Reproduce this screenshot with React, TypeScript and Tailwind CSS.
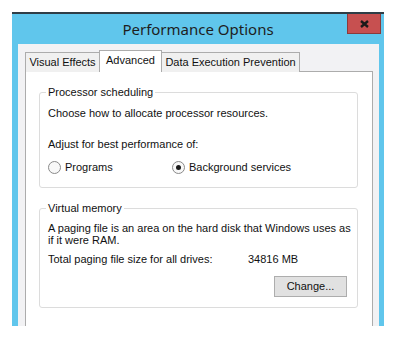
export default function App() {
  return (
    <div className="w-[397px] h-[339px] bg-white pt-[12px] pl-[12px] font-['Liberation_Sans',Arial,sans-serif] text-[11px] leading-[13px] text-[#111]">
      <div className="w-[372px] h-[314px] overflow-hidden flex flex-col bg-[#60c6ec] border-t-2 border-[#2f3d46]">
        <TitleBar />
        <div className="flex-1 flex pl-[6px] pr-[5px]">
          <div className="flex-1 bg-[#f2f2f4] pt-[6px] pl-[7px] pr-[6px] flex flex-col">
            <Tabs />
            <div className="flex-1 bg-white border border-b-0 border-[#acacac] pt-[14px] pl-[13px] pr-[14px] flex flex-col">
              <GroupBox title="Processor scheduling">
                <div className="pt-[8px] pb-[13px]">
                  <p>Choose how to allocate processor resources.</p>
                  <p className="mt-[18px]">Adjust for best performance of:</p>
                  <div className="flex mt-[10px] h-[13px] items-center">
                    <Radio label="Programs" className="w-[124px]" />
                    <Radio label="Background services" checked />
                  </div>
                </div>
              </GroupBox>
              <div className="h-[14px]" />
              <GroupBox title="Virtual memory">
                <div className="pt-[7px] pb-[10px]">
                  <p className="leading-[12px] pr-[2px]">
                    A paging file is an area on the hard disk that Windows uses as if it were RAM.
                  </p>
                  <div className="flex mt-[7px]">
                    <span className="w-[200px]">Total paging file size for all drives:</span>
                    <span>34816 MB</span>
                  </div>
                  <div className="flex justify-end mt-[10px] pr-[10px]">
                    <button className="w-[73px] h-[21px] bg-[#e1e1e1] border border-[#adadad] text-[#111] text-[11px]">
                      Change...
                    </button>
                  </div>
                </div>
              </GroupBox>
            </div>
          </div>
        </div>
      </div>
    </div>
  );
}

function TitleBar() {
  return (
    <div className="h-[30px] grid grid-cols-[1fr_auto_1fr] items-center">
      <div />
      <div className="font-['Noto_Sans',sans-serif] text-[15px] text-[#1e1e1e] leading-[30px]">
        Performance Options
      </div>
      <div className="flex justify-end items-start self-start pr-[3px]">
        <div className="w-[34px] h-[20px] bg-[#c75050] border border-[#8c3a3a] border-t-0 flex items-center justify-center">
          <svg width="9" height="8" viewBox="0 0 9 8">
            <path d="M1 1 L8 7 M8 1 L1 7" stroke="#1a1a1a" strokeWidth="2.4" />
          </svg>
        </div>
      </div>
    </div>
  );
}

function Tabs() {
  return (
    <div className="flex items-end h-[22px] -mb-px relative z-10">
      <div className="w-[75px] h-[20px] bg-[#f0f0f0] border border-b-0 border-[#acacac] flex items-center justify-center">
        Visual Effects
      </div>
      <div className="w-[63px] h-[22px] bg-white border border-b-0 border-[#acacac] flex items-center justify-center pb-[3px] -mx-px">
        Advanced
      </div>
      <div className="w-[139px] h-[20px] bg-[#f0f0f0] border border-b-0 border-[#acacac] flex items-center justify-center">
        Data Execution Prevention
      </div>
    </div>
  );
}

function GroupBox({ title, children }: { title: string; children: React.ReactNode }) {
  return (
    <fieldset className="border border-[#dcdcdc] rounded-[3px] pl-[8px]">
      <legend className="ml-[-2px] px-[2px] leading-[13px]">{title}</legend>
      {children}
    </fieldset>
  );
}

function Radio({ label, checked, className }: { label: string; checked?: boolean; className?: string }) {
  return (
    <div className={`flex items-center gap-[4px] ${className ?? ''}`}>
      <span className="w-[13px] h-[13px] rounded-full border border-[#8a8a8a] bg-[#f8f8f8] flex items-center justify-center">
        {checked && <span className="w-[5px] h-[5px] rounded-full bg-[#1a1a1a]" />}
      </span>
      <span>{label}</span>
    </div>
  );
}
